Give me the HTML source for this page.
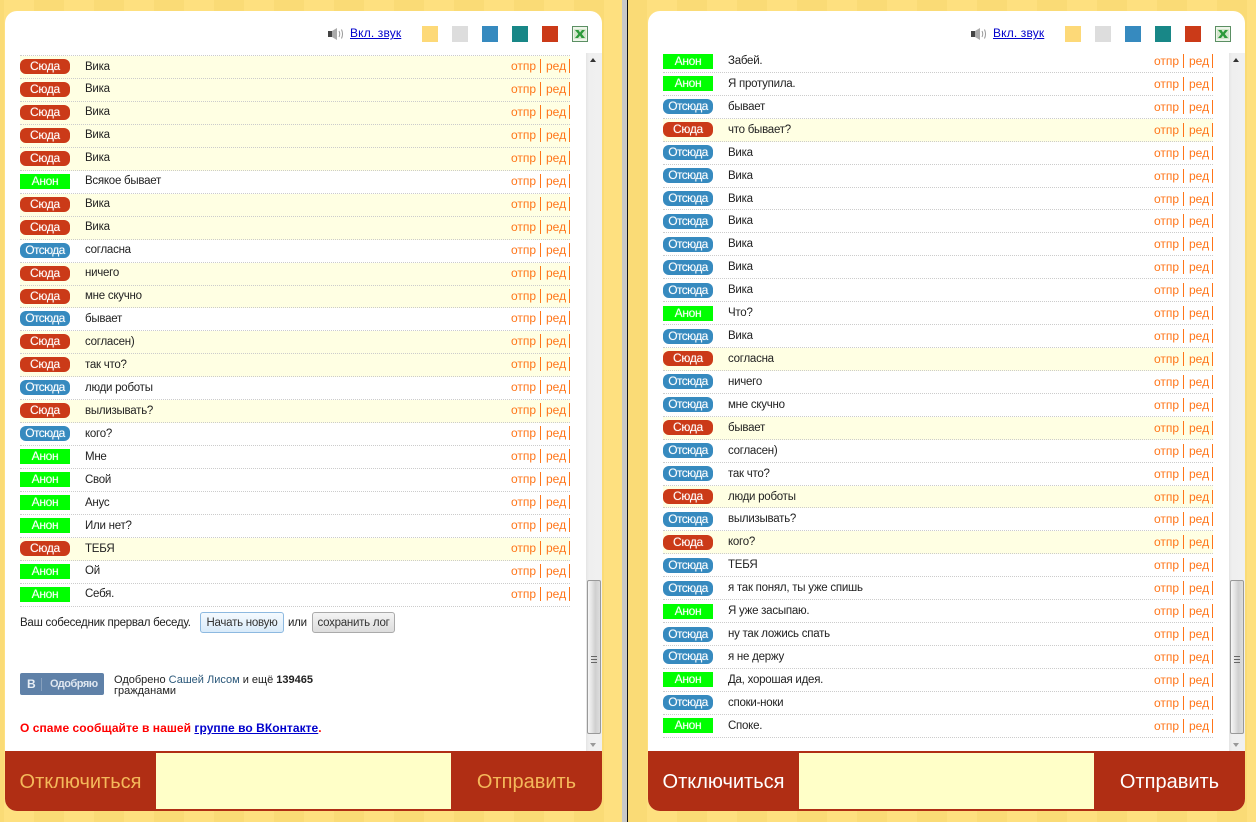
<!DOCTYPE html>
<html><head><meta charset="utf-8"><style>
*{box-sizing:border-box}
html,body{margin:0;padding:0;width:1256px;height:822px;overflow:hidden;background:#fddf7e;font:12px "Liberation Sans",sans-serif;color:#222}
.pane{position:absolute;top:0;height:822px;overflow:hidden}
#p1{left:0;width:622px;background-image:linear-gradient(90deg,#fee07f 0,#fee07f 30px,#fadb76 30px,#fadb76 60px);background-size:60px 100%;background-position:4px 0}
#p2{left:628px;width:628px;background-image:linear-gradient(90deg,#fee07f 0,#fee07f 30px,#fadb76 30px,#fadb76 60px);background-size:60px 100%;background-position:19px 0}
#d1{position:absolute;left:622px;top:0;width:5px;height:822px;background:#c8c8c8}
#d2{position:absolute;left:627px;top:0;width:1px;height:822px;background:#111}
.win{position:absolute;top:11px;width:597px;height:800px;background:#fff;border-radius:12px;overflow:hidden}
#p1 .win{left:5px}
#p2 .win{left:20px}
.spk{position:absolute;left:322px;top:16px}
.snd{position:absolute;left:345px;top:15px;color:#00c;text-decoration:underline;line-height:15px;letter-spacing:.15px}
.sq{position:absolute;top:15px;width:16px;height:16px}
.xl{position:absolute;left:567px;top:15px}
.list{position:absolute;left:15px;top:44px;width:550px;height:696px;overflow:hidden;border-top:1px dotted #ccc;font-size:11.5px;letter-spacing:-.25px}
#p2 .list{top:43px;height:697px;border-top:0}
.in{position:absolute;left:0;top:0;width:550px}
#p2 .in{top:-4px}
.r{position:relative;height:22.96px;border-bottom:1px dotted #ccc}
#p2 .r{height:22.93px}
.y{background:#ffffe3}
.b{position:absolute;left:0;top:3px;width:50px;height:15px;color:#fff;text-align:center;line-height:15px;letter-spacing:-.3px;font-size:12px;text-shadow:0 0 1px rgba(255,255,255,.4)}
#p2 .b{top:3.5px}
.o{letter-spacing:-.6px}
.s{background:#cb3a18;border-radius:6px}
.o{background:#368abf;border-radius:6px}
.a{background:#0f0}
.t{position:absolute;left:65px;top:3.5px;line-height:15px;white-space:nowrap}
#p2 .t{top:4px}
.c{position:absolute;left:491px;top:3px;line-height:15px;color:#ff7519;white-space:nowrap;width:59px;height:15px;font-size:12px;letter-spacing:0}
#p2 .c{top:4px}
.c i{font-style:normal;position:absolute;top:0}
.c i:nth-child(1){left:0}.c i:nth-child(3){left:35px}
.c u{position:absolute;top:0;width:1px;height:14px;background:#ff7519}
.c u:nth-child(2){left:29px}.c u:nth-child(4){left:58px}
.sb{position:absolute;left:581px;top:42px;width:16px;height:698px;background:linear-gradient(90deg,#e4e4e4 0,#efefef 3px,#f0f0f0 100%)}
.thumb{position:absolute;left:1px;top:527px;width:14px;height:154px;border:1px solid #999;border-radius:2px;background:linear-gradient(90deg,#f6f6f6,#e2e2e2 35%,#cfcfcf 60%,#ddd)}
.up,.dn{position:absolute;left:4px;width:0;height:0;border-left:3.5px solid transparent;border-right:3.5px solid transparent}
.up{top:5px;border-bottom:4px solid #333}
.dn{top:690px;border-top:4px solid #999}
.gr{position:absolute;left:3px;top:75px;width:6px;height:7px;border-top:1px solid #666;border-bottom:1px solid #666}
.gr:after{content:"";position:absolute;left:0;top:2px;width:6px;height:1px;background:#666}
.abs{position:absolute;white-space:nowrap}
.btn{position:absolute;height:21px;line-height:20px;text-align:center;border-radius:3px;color:#333;white-space:nowrap}
.bar{position:absolute;left:0;top:740px;width:597px;height:60px;background:#b02e14}
.bar input{position:absolute;left:151px;top:2px;width:295px;height:56px;background:#ffffc8;border:0;padding:0}
.bt{position:absolute;top:1px;line-height:60px;font-size:20px;text-align:center}
</style></head><body>

<div id="p1" class="pane"><div class="win">
<svg class="spk" width="17" height="14" viewBox="0 0 17 14"><rect x="1" y="4" width="4" height="6" fill="#444"/><path d="M5 4L10 1V13L5 10Z" fill="#aaa"/><path d="M12 4Q13.5 7 12 10M14.5 2.5Q16.5 7 14.5 11.5" fill="none" stroke="#999"/></svg>
<div class="snd abs">Вкл. звук</div>
<div class="sq" style="left:417px;background:#fdd978"></div><div class="sq" style="left:447px;background:#ddd"></div><div class="sq" style="left:477px;background:#368abf"></div><div class="sq" style="left:507px;background:#188787"></div><div class="sq" style="left:537px;background:#cb3a18"></div>
<svg class="xl" width="16" height="16" viewBox="0 0 16 16"><rect width="16" height="16" fill="#5b8f63"/><rect x="1" y="1" width="14" height="14" fill="#eef5ea"/><rect x="2" y="3" width="12" height="10" fill="#d3e6cc"/><path d="M3 4H6.500L8 6.500L10 4H13L9.800 8L13 12H9.500L8 9.500L6 12H3L6.300 8Z" fill="#2c9a3a"/></svg>
<div class="list"><div class="in">
<div class="r y"><span class="b s">Сюда</span><span class="t">Вика</span><span class="c"><i>отпр</i><u></u><i>ред</i><u></u></span></div>
<div class="r y"><span class="b s">Сюда</span><span class="t">Вика</span><span class="c"><i>отпр</i><u></u><i>ред</i><u></u></span></div>
<div class="r y"><span class="b s">Сюда</span><span class="t">Вика</span><span class="c"><i>отпр</i><u></u><i>ред</i><u></u></span></div>
<div class="r y"><span class="b s">Сюда</span><span class="t">Вика</span><span class="c"><i>отпр</i><u></u><i>ред</i><u></u></span></div>
<div class="r y"><span class="b s">Сюда</span><span class="t">Вика</span><span class="c"><i>отпр</i><u></u><i>ред</i><u></u></span></div>
<div class="r"><span class="b a">Анон</span><span class="t">Всякое бывает</span><span class="c"><i>отпр</i><u></u><i>ред</i><u></u></span></div>
<div class="r y"><span class="b s">Сюда</span><span class="t">Вика</span><span class="c"><i>отпр</i><u></u><i>ред</i><u></u></span></div>
<div class="r y"><span class="b s">Сюда</span><span class="t">Вика</span><span class="c"><i>отпр</i><u></u><i>ред</i><u></u></span></div>
<div class="r"><span class="b o">Отсюда</span><span class="t">согласна</span><span class="c"><i>отпр</i><u></u><i>ред</i><u></u></span></div>
<div class="r y"><span class="b s">Сюда</span><span class="t">ничего</span><span class="c"><i>отпр</i><u></u><i>ред</i><u></u></span></div>
<div class="r y"><span class="b s">Сюда</span><span class="t">мне скучно</span><span class="c"><i>отпр</i><u></u><i>ред</i><u></u></span></div>
<div class="r"><span class="b o">Отсюда</span><span class="t">бывает</span><span class="c"><i>отпр</i><u></u><i>ред</i><u></u></span></div>
<div class="r y"><span class="b s">Сюда</span><span class="t">согласен)</span><span class="c"><i>отпр</i><u></u><i>ред</i><u></u></span></div>
<div class="r y"><span class="b s">Сюда</span><span class="t">так что?</span><span class="c"><i>отпр</i><u></u><i>ред</i><u></u></span></div>
<div class="r"><span class="b o">Отсюда</span><span class="t">люди роботы</span><span class="c"><i>отпр</i><u></u><i>ред</i><u></u></span></div>
<div class="r y"><span class="b s">Сюда</span><span class="t">вылизывать?</span><span class="c"><i>отпр</i><u></u><i>ред</i><u></u></span></div>
<div class="r"><span class="b o">Отсюда</span><span class="t">кого?</span><span class="c"><i>отпр</i><u></u><i>ред</i><u></u></span></div>
<div class="r"><span class="b a">Анон</span><span class="t">Мне</span><span class="c"><i>отпр</i><u></u><i>ред</i><u></u></span></div>
<div class="r"><span class="b a">Анон</span><span class="t">Свой</span><span class="c"><i>отпр</i><u></u><i>ред</i><u></u></span></div>
<div class="r"><span class="b a">Анон</span><span class="t">Анус</span><span class="c"><i>отпр</i><u></u><i>ред</i><u></u></span></div>
<div class="r"><span class="b a">Анон</span><span class="t">Или нет?</span><span class="c"><i>отпр</i><u></u><i>ред</i><u></u></span></div>
<div class="r y"><span class="b s">Сюда</span><span class="t">ТЕБЯ</span><span class="c"><i>отпр</i><u></u><i>ред</i><u></u></span></div>
<div class="r"><span class="b a">Анон</span><span class="t">Ой</span><span class="c"><i>отпр</i><u></u><i>ред</i><u></u></span></div>
<div class="r"><span class="b a">Анон</span><span class="t">Себя.</span><span class="c"><i>отпр</i><u></u><i>ред</i><u></u></span></div>
<div style="position:absolute;left:0;top:557px;line-height:20px;white-space:nowrap">Ваш собеседник прервал беседу.</div>
<div class="btn" style="left:180px;top:556px;width:84px;border:1px solid #8db9e0;background:linear-gradient(#f5fafe,#d9ebfa)">Начать новую</div>
<div style="position:absolute;left:268px;top:557px;line-height:20px">или</div>
<div class="btn" style="left:292px;top:556px;width:83px;border:1px solid #aaa;background:linear-gradient(#f4f4f4,#ddd)">сохранить лог</div>
<div style="position:absolute;left:0;top:617px;width:84px;height:22px;background:#5f81a8;border-radius:2px;color:#dfe7f0;font-size:11px;font-weight:bold;line-height:22px;letter-spacing:-.5px"><span style="position:absolute;left:7px;font-size:12px;color:#e8eef5">В</span><span style="position:absolute;left:21px;top:5px;width:1px;height:13px;background:#87a0bd"></span><span style="position:absolute;left:30px">Одобряю</span></div>
<div style="position:absolute;left:94px;top:619px;font-size:11px;line-height:11px;white-space:nowrap;letter-spacing:0">Одобрено <span style="color:#2b587a">Сашей Лисом</span> и ещё <b>139465</b><br>гражданами</div>
<div style="position:absolute;left:0;top:664px;font-size:12px;font-weight:bold;color:#f00;line-height:16px;white-space:nowrap;letter-spacing:.05px">О спаме сообщайте в нашей <span style="color:#00c;text-decoration:underline">группе во ВКонтакте</span>.</div>
</div></div>
<div class="sb"><div class="up"></div><div class="thumb"><div class="gr"></div></div><div class="dn"></div></div>
<div class="bar"><div class="bt" style="left:0;width:151px;color:#f4b85a">Отключиться</div><input><div class="bt" style="left:446px;width:151px;color:#f4b85a">Отправить</div></div>
</div></div>

<div id="d1"></div><div id="d2"></div>

<div id="p2" class="pane"><div class="win">
<svg class="spk" width="17" height="14" viewBox="0 0 17 14"><rect x="1" y="4" width="4" height="6" fill="#444"/><path d="M5 4L10 1V13L5 10Z" fill="#aaa"/><path d="M12 4Q13.5 7 12 10M14.5 2.5Q16.5 7 14.5 11.5" fill="none" stroke="#999"/></svg>
<div class="snd abs">Вкл. звук</div>
<div class="sq" style="left:417px;background:#fdd978"></div><div class="sq" style="left:447px;background:#ddd"></div><div class="sq" style="left:477px;background:#368abf"></div><div class="sq" style="left:507px;background:#188787"></div><div class="sq" style="left:537px;background:#cb3a18"></div>
<svg class="xl" width="16" height="16" viewBox="0 0 16 16"><rect width="16" height="16" fill="#5b8f63"/><rect x="1" y="1" width="14" height="14" fill="#eef5ea"/><rect x="2" y="3" width="12" height="10" fill="#d3e6cc"/><path d="M3 4H6.500L8 6.500L10 4H13L9.800 8L13 12H9.500L8 9.500L6 12H3L6.300 8Z" fill="#2c9a3a"/></svg>
<div class="list"><div class="in">
<div class="r"><span class="b a">Анон</span><span class="t">Забей.</span><span class="c"><i>отпр</i><u></u><i>ред</i><u></u></span></div>
<div class="r"><span class="b a">Анон</span><span class="t">Я протупила.</span><span class="c"><i>отпр</i><u></u><i>ред</i><u></u></span></div>
<div class="r"><span class="b o">Отсюда</span><span class="t">бывает</span><span class="c"><i>отпр</i><u></u><i>ред</i><u></u></span></div>
<div class="r y"><span class="b s">Сюда</span><span class="t">что бывает?</span><span class="c"><i>отпр</i><u></u><i>ред</i><u></u></span></div>
<div class="r"><span class="b o">Отсюда</span><span class="t">Вика</span><span class="c"><i>отпр</i><u></u><i>ред</i><u></u></span></div>
<div class="r"><span class="b o">Отсюда</span><span class="t">Вика</span><span class="c"><i>отпр</i><u></u><i>ред</i><u></u></span></div>
<div class="r"><span class="b o">Отсюда</span><span class="t">Вика</span><span class="c"><i>отпр</i><u></u><i>ред</i><u></u></span></div>
<div class="r"><span class="b o">Отсюда</span><span class="t">Вика</span><span class="c"><i>отпр</i><u></u><i>ред</i><u></u></span></div>
<div class="r"><span class="b o">Отсюда</span><span class="t">Вика</span><span class="c"><i>отпр</i><u></u><i>ред</i><u></u></span></div>
<div class="r"><span class="b o">Отсюда</span><span class="t">Вика</span><span class="c"><i>отпр</i><u></u><i>ред</i><u></u></span></div>
<div class="r"><span class="b o">Отсюда</span><span class="t">Вика</span><span class="c"><i>отпр</i><u></u><i>ред</i><u></u></span></div>
<div class="r"><span class="b a">Анон</span><span class="t">Что?</span><span class="c"><i>отпр</i><u></u><i>ред</i><u></u></span></div>
<div class="r"><span class="b o">Отсюда</span><span class="t">Вика</span><span class="c"><i>отпр</i><u></u><i>ред</i><u></u></span></div>
<div class="r y"><span class="b s">Сюда</span><span class="t">согласна</span><span class="c"><i>отпр</i><u></u><i>ред</i><u></u></span></div>
<div class="r"><span class="b o">Отсюда</span><span class="t">ничего</span><span class="c"><i>отпр</i><u></u><i>ред</i><u></u></span></div>
<div class="r"><span class="b o">Отсюда</span><span class="t">мне скучно</span><span class="c"><i>отпр</i><u></u><i>ред</i><u></u></span></div>
<div class="r y"><span class="b s">Сюда</span><span class="t">бывает</span><span class="c"><i>отпр</i><u></u><i>ред</i><u></u></span></div>
<div class="r"><span class="b o">Отсюда</span><span class="t">согласен)</span><span class="c"><i>отпр</i><u></u><i>ред</i><u></u></span></div>
<div class="r"><span class="b o">Отсюда</span><span class="t">так что?</span><span class="c"><i>отпр</i><u></u><i>ред</i><u></u></span></div>
<div class="r y"><span class="b s">Сюда</span><span class="t">люди роботы</span><span class="c"><i>отпр</i><u></u><i>ред</i><u></u></span></div>
<div class="r"><span class="b o">Отсюда</span><span class="t">вылизывать?</span><span class="c"><i>отпр</i><u></u><i>ред</i><u></u></span></div>
<div class="r y"><span class="b s">Сюда</span><span class="t">кого?</span><span class="c"><i>отпр</i><u></u><i>ред</i><u></u></span></div>
<div class="r"><span class="b o">Отсюда</span><span class="t">ТЕБЯ</span><span class="c"><i>отпр</i><u></u><i>ред</i><u></u></span></div>
<div class="r"><span class="b o">Отсюда</span><span class="t">я так понял, ты уже спишь</span><span class="c"><i>отпр</i><u></u><i>ред</i><u></u></span></div>
<div class="r"><span class="b a">Анон</span><span class="t">Я уже засыпаю.</span><span class="c"><i>отпр</i><u></u><i>ред</i><u></u></span></div>
<div class="r"><span class="b o">Отсюда</span><span class="t">ну так ложись спать</span><span class="c"><i>отпр</i><u></u><i>ред</i><u></u></span></div>
<div class="r"><span class="b o">Отсюда</span><span class="t">я не держу</span><span class="c"><i>отпр</i><u></u><i>ред</i><u></u></span></div>
<div class="r"><span class="b a">Анон</span><span class="t">Да, хорошая идея.</span><span class="c"><i>отпр</i><u></u><i>ред</i><u></u></span></div>
<div class="r"><span class="b o">Отсюда</span><span class="t">споки-ноки</span><span class="c"><i>отпр</i><u></u><i>ред</i><u></u></span></div>
<div class="r"><span class="b a">Анон</span><span class="t">Споке.</span><span class="c"><i>отпр</i><u></u><i>ред</i><u></u></span></div>
</div></div>
<div class="sb"><div class="up"></div><div class="thumb"><div class="gr"></div></div><div class="dn"></div></div>
<div class="bar"><div class="bt" style="left:0;width:151px;color:#fff">Отключиться</div><input><div class="bt" style="left:446px;width:151px;color:#fff">Отправить</div></div>
</div></div>
</body></html>
